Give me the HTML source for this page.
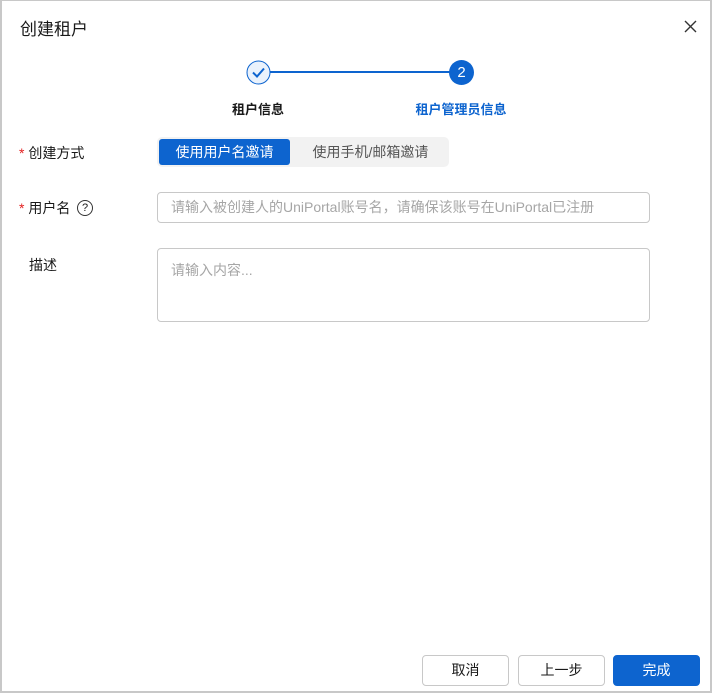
<!DOCTYPE html><html><head><meta charset="utf-8"><style>
*{box-sizing:border-box;margin:0;padding:0}
body{width:712px;height:693px;background:#fff;font-family:"Liberation Sans","Noto Sans CJK SC",sans-serif;position:relative;overflow:hidden;color:#191919}
.frame{position:absolute;left:0;top:0;width:712px;height:693px;border:2px solid #c8c8c8;border-top-width:1px}
.a{position:absolute}
.btn{position:absolute;top:655px;height:31px;width:87px;border:1px solid #c8c8c8;border-radius:4px;font-size:14px;text-align:center;line-height:29px;color:#191919;background:#fff}
</style></head><body><div class="frame"></div>
<div class="a" style="left:20px;top:15px;font-size:17px">创建租户</div>
<svg class="a" style="left:684px;top:20px" width="13" height="13"><path d="M1 1L12 12M12 1L1 12" stroke="#333" stroke-width="1.4"/></svg>
<div class="a" style="left:270px;top:71px;width:180px;height:1.5px;background:#0d64cf"></div>
<svg class="a" style="left:246px;top:60px" width="25" height="25"><circle cx="12.5" cy="12.5" r="11.5" fill="#eaf2fc" stroke="#0d64cf" stroke-width="1"/><path d="M7 12.5L11 16.5L18 8.5" fill="none" stroke="#0d64cf" stroke-width="2"/></svg>
<div class="a" style="left:449px;top:60px;width:25px;height:25px;border-radius:50%;background:#0d64cf;color:#fff;font-size:15px;text-align:center;line-height:25px">2</div>
<div class="a" style="left:218px;top:99px;width:80px;text-align:center;font-size:13px;font-weight:bold">租户信息</div>
<div class="a" style="left:401px;top:99px;width:120px;text-align:center;font-size:13px;font-weight:bold;color:#0d64cf">租户管理员信息</div>
<div class="a" style="left:19px;top:143px;font-size:14px"><span style="color:#e32020">*</span> 创建方式</div>
<div class="a" style="left:157px;top:137px;width:292px;height:30px;background:#f2f2f2;border-radius:5px"></div>
<div class="a" style="left:159px;top:139px;width:131px;height:26px;background:#0d64cf;border-radius:3px;color:#fff;font-size:14px;text-align:center;line-height:26px">使用用户名邀请</div>
<div class="a" style="left:292px;top:139px;width:157px;height:26px;color:#555;font-size:14px;text-align:center;line-height:26px">使用手机/邮箱邀请</div>
<div class="a" style="left:19px;top:198px;font-size:14px"><span style="color:#e32020">*</span> 用户名</div>
<div class="a" style="left:77px;top:200px;width:16px;height:16px;border:1.2px solid #333;border-radius:50%;font-size:11px;text-align:center;line-height:14px">?</div>
<div class="a" style="left:157px;top:192px;width:493px;height:31px;border:1px solid #c8c8c8;border-radius:4px;font-size:14px;color:#a6a6a6;padding-left:13px;line-height:29px;white-space:nowrap">请输入被创建人的UniPortal账号名，请确保该账号在UniPortal已注册</div>
<div class="a" style="left:29px;top:255px;font-size:14px">描述</div>
<div class="a" style="left:157px;top:248px;width:493px;height:74px;border:1px solid #c8c8c8;border-radius:4px;font-size:14px;color:#a6a6a6;padding:11px 13px">请输入内容...</div>
<div class="btn" style="left:422px">取消</div>
<div class="btn" style="left:518px">上一步</div>
<div class="btn" style="left:613px;background:#0d64cf;border-color:#0d64cf;color:#fff">完成</div>
</body></html>
